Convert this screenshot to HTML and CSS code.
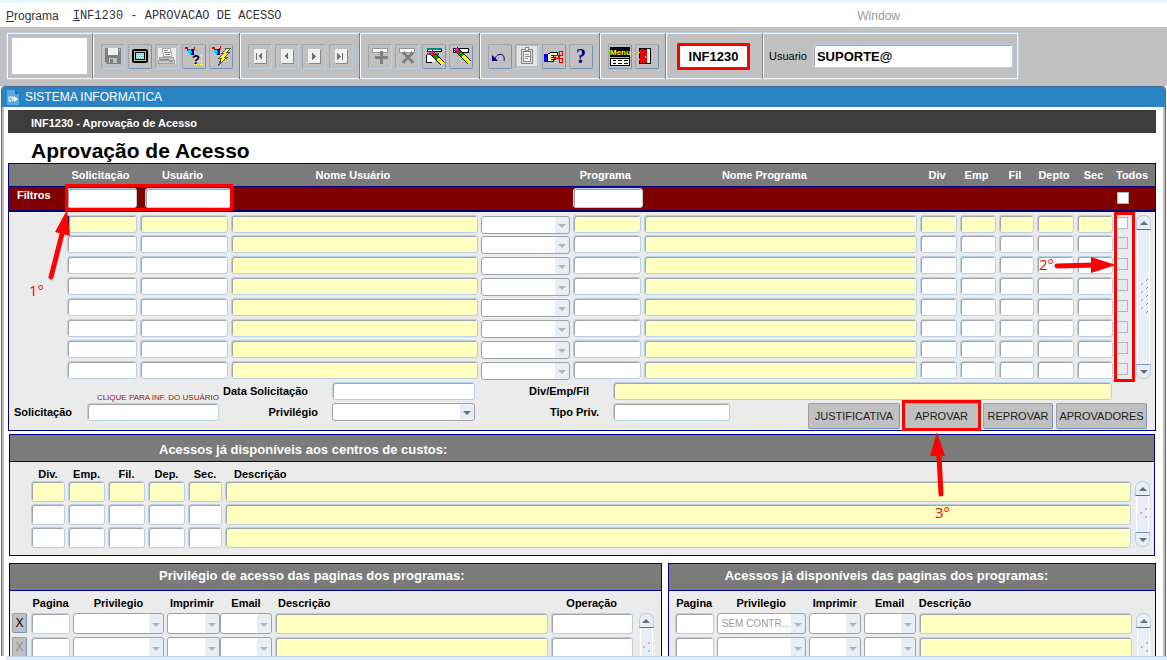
FILE: index.html
```html
<!DOCTYPE html>
<html lang="pt-BR">
<head>
  <meta charset="utf-8">
  <title>INF1230 - Aprovação de Acesso</title>
  <meta content="width=device-width, initial-scale=1" name="viewport">
  <link rel="stylesheet" href="styles.css">
</head>
<body>
  <nav class="menubar">
    <a href="#"><u>P</u>rograma</a>
    <a href="#" class="mono"><u>I</u>NF1230 - APROVACAO DE ACESSO</a>
    <a href="#" class="menu-window">Window</a>
  </nav>

  <!-- Toolbar -->
  <header class="toolbar-area">
    <div class="toolbar">
      <div class="group logo-group"><div class="logo"></div></div>

      <div class="group">
        <button type="button" class="tool" aria-label="Salvar" disabled>
          <svg width="20" height="20"><path fill="#808080" d="M2 2h16v16H4l-2-2z"/><path fill="#eee" d="M5 2h10v7H5z"/><path fill="#c0c0c0" d="M16 3h1v2h-1zM6 12h8v5H6z"/><path fill="#808080" d="M7 13h3v4H7z"/></svg>
        </button>
        <button type="button" class="tool" aria-label="Tela">
          <svg width="20" height="20"><path d="M3 3h14v1h1v12h-1v1H3v-1H2V4h1z"/><path fill="#c0c0c0" d="M4 5h12v10H4z"/><path d="M5 6h10v8H5z"/><path fill="#8ff" d="M6 7h8v6H6z"/><path stroke="#7aa" stroke-dasharray="1 1" d="M6 8.500h8M7 10.500h7M6 12.500h8"/></svg>
        </button>
        <button type="button" class="tool" aria-label="Imprimir" disabled>
          <svg width="20" height="20"><path fill="#eee" d="M1 2h18v16H1z"/><path fill="#fff" stroke="#aaa" d="M5.500 2.500h8l1 8h-8z"/><path stroke="#808080" d="M7 4.500h4M7 6.500h6M8 8.500h5"/><path fill="#c8c8c8" stroke="#a0a0a0" d="M2.500 11.500h14v3h-14zM1.500 14.500h16v3h-16z"/><path fill="#808080" d="M12 15h3v1h-3zM3 13h9v1H3z"/></svg>
        </button>
        <button type="button" class="tool" aria-label="Entrar consulta">
          <svg width="20" height="20"><path fill="#e00" d="M1 1h3v2h2v2H3V3H1zM10 1h1v3h-2V3h1z"/><path fill="#0cf" d="M4 4h4v2h1v3H6V7H4z"/><path fill="#00008b" d="M7 3h3v6H7V7h1V5H7z"/><path stroke="#ff6" stroke-dasharray="1 1" d="M10 9.500h9M11 12.500h8M9 15.500h10M10 18.500h9M17.500 8v11"/><text x="8" y="18" class="query-mark">?</text></svg>
        </button>
        <button type="button" class="tool" aria-label="Executar consulta">
          <svg width="20" height="20"><path fill="#e00" d="M1 1h3v2h2v2H3V3H1zM9 0h1v3H8V2h1z"/><path fill="#0cf" d="M3 4h4v2h1v3H5V7H3z"/><path fill="#00008b" d="M6 3h3v6H6V7h1V5H6z"/><path fill="#ff0" stroke="#555" d="M15 2.500h4l-3 4h2l-4 5h2l-8 7 2-6H8l4-5h-1z"/></svg>
        </button>
      </div>

      <div class="group">
        <button type="button" class="tool nav" aria-label="Primeiro" disabled>
          <svg width="12" height="14"><path d="M2 4h1v7H2zM4 7l4-3v7z"/></svg>
        </button>
        <button type="button" class="tool nav" aria-label="Anterior" disabled>
          <svg width="12" height="14"><path d="M3 7l4-3v7z"/></svg>
        </button>
        <button type="button" class="tool nav" aria-label="Próximo" disabled>
          <svg width="12" height="14"><path d="M4 4l4 3-4 4z"/></svg>
        </button>
        <button type="button" class="tool nav" aria-label="Último" disabled>
          <svg width="12" height="14"><path d="M2 4l4 3-4 4zM7 4h1v7H7z"/></svg>
        </button>
      </div>

      <div class="group">
        <button type="button" class="tool" aria-label="Inserir registro" disabled>
          <svg width="20" height="20"><path fill="#fff" stroke="#999" d="M2.500 2.500h15v4h-15z"/><path fill="#808080" d="M10 5h3v5h5v3h-5v5h-3v-5H5v-3h5z"/></svg>
        </button>
        <button type="button" class="tool" aria-label="Remover registro" disabled>
          <svg width="20" height="20"><path fill="#fff" stroke="#999" d="M2.500 2.500h15v4h-15z"/><path stroke="#808080" stroke-width="3" fill="none" d="M6 6l10 11M16 6L6 17"/></svg>
        </button>
        <button type="button" class="tool" aria-label="Editar registro">
          <svg width="20" height="20"><path fill="#fff" stroke="#000" d="M3.500 2.500h14v3h-14z"/><path fill="#088" d="M3 2h15v2H3zM3 7h12v2H3z"/><path fill="#fff" d="M2 9h9v7H2z"/><path fill="#000" d="M2 9h1v7H2zM2 16h6v1H2z"/><path stroke="#000" stroke-width="5" d="M7 6l12 12"/><path stroke="#f0f" stroke-width="4" d="M7 6l3 3"/><path stroke="#e00" stroke-width="4" d="M9 8l3 3"/><path stroke="#090" stroke-width="4" d="M11 10l3 3"/><path stroke="#ff0" stroke-width="4" d="M14 13l5 5"/></svg>
        </button>
        <button type="button" class="tool" aria-label="Limpar registro">
          <svg width="20" height="20"><path fill="#fff" stroke="#000" d="M2.500 2.500h15v4h-15z"/><path stroke="#000" stroke-width="5" d="M5 3l14 14"/><path stroke="#f0f" stroke-width="4" d="M5 3l3 3"/><path stroke="#e00" stroke-width="4" d="M7 5l3 3"/><path stroke="#090" stroke-width="4" d="M9 7l3 3"/><path stroke="#ff0" stroke-width="4" d="M12 10l7 7"/></svg>
        </button>
      </div>

      <div class="group">
        <button type="button" class="tool" aria-label="Desfazer">
          <svg width="20" height="20" class="smooth"><path fill="none" stroke="#00007b" d="M5 13c1-6 11-7 9 2"/><path fill="#00007b" d="M2 9v6h6z"/></svg>
        </button>
        <button type="button" class="tool" aria-label="Colar" disabled>
          <svg width="20" height="20"><path fill="#e4e4e4" d="M0 0h20v20H0z"/><path fill="#ddd" stroke="#888" d="M4.500 3.500h11v14h-11z"/><path fill="#fff" stroke="#888" d="M6.500 5.500h7v10h-7zM8.500 1.500h3v3h-3z"/><path stroke="#888" d="M8 8.500h4M8 10.500h5M8 12.500h3"/></svg>
        </button>
        <button type="button" class="tool" aria-label="Recortar">
          <svg width="20" height="20"><path fill="#00f" d="M0 8h3v8H0z"/><path fill="#ff9" stroke="#000" d="M3.500 8.500l3-2h7v3h-4v2h2v2h-2v2h-6z"/><path stroke="#000" d="M7 9.500h3M7 11.500h3M7 13.500h2"/><path fill="none" stroke="#e00" d="M10 9.500h4l2 2M10 12.500h4l2-2M15.500 5.500h3v4h-3zM15.500 12.500h3v4h-3z"/></svg>
        </button>
        <button type="button" class="tool" aria-label="Ajuda">
          <svg width="20" height="22"><text x="5" y="18" class="help-mark">?</text></svg>
        </button>
      </div>

      <div class="group">
        <button type="button" class="tool" aria-label="Menu">
          <svg width="22" height="20"><path d="M1 1h20v19H1z"/><text x="1" y="9" class="menu-mark">Menu</text><path fill="#0ff" d="M1 11h19v1H1z"/><path fill="#fff" d="M2 13h18v6H2z"/><path stroke="#000" d="M4 14.500h3M9 14.500h4M15 14.500h4M4 17.500h3M9 17.500h4M15 17.500h4"/></svg>
        </button>
        <button type="button" class="tool" aria-label="Sair">
          <svg width="20" height="20"><path d="M2 2h12v16H2z"/><path fill="#fff" d="M10 3h3v14h-3z"/><path fill="#e00" d="M3 3l7 1v12l-3 1H3z"/><path fill="#ff0" d="M1 6h2v1H1zM1 13h2v1H1zM8 10h1v2H8z"/></svg>
        </button>
      </div>

      <div class="group code-group">
        <input class="program-code" aria-label="Código do programa" value="INF1230">
      </div>

      <div class="group user-group">
        <label for="usuario">Usuario</label>
        <input id="usuario" class="field user-field" value="SUPORTE@">
      </div>
    </div>
  </header>

  <!-- Application window -->
  <main class="window">
    <div class="titlebar">
      <svg width="12" height="15" viewBox="0 0 12 15"><path fill="#55aade" d="M0 0h8l4 4v11H0z"/><path fill="#1c6ca8" d="M8 0v4h4z"/><circle cx="4" cy="9" r="2" fill="none" stroke="#fff" stroke-width="2" stroke-dasharray="2 1"/><path fill="#fff" d="M7 6l4 3-4 3z"/></svg>
      <span>SISTEMA INFORMATICA</span>
    </div>

    <div class="content">
      <div class="program-bar">INF1230 - Aprovação de Acesso</div>
      <h1>Aprovação de Acesso</h1>

      <section class="panel requests">
        <table class="requests-table">
          <colgroup>
            <col class="w58"><col class="w73"><col class="w91"><col class="w-name"><col class="w92"><col class="w71"><col>
            <col class="w40"><col class="w39"><col class="w38"><col class="w40"><col class="w39"><col class="w17"><col class="w22">
          </colgroup>
          <thead>
            <tr class="names">
              <th></th><th>Solicitação</th><th>Usuário</th><th>Nome Usuário</th><th></th><th>Programa</th>
              <th class="program-name">Nome Programa</th><th>Div</th><th>Emp</th><th>Fil</th><th>Depto</th><th>Sec</th>
              <th colspan="2" class="left">Todos</th>
            </tr>
            <tr class="filters">
              <th class="filter-title">Filtros</th>
              <td class="anchor">
                <input class="field" aria-label="Filtro solicitação">
                <div class="mark mark-filters"></div>
                <svg class="note note-1" width="50" height="95"><path class="line" d="M24 69L35 26"/><path class="head" d="M40 2l3 26-15-4z"/><text x="2" y="88">1°</text></svg>
              </td>
              <td class="filter-user"><input class="field" aria-label="Filtro usuário"></td>
              <td></td><td></td>
              <td class="filter-program"><input class="field" aria-label="Filtro programa"></td>
              <td></td><td></td><td></td><td></td><td></td><td></td>
              <td><input type="checkbox" aria-label="Todos"></td><td></td>
            </tr>
          </thead>
          <tbody data-rows="8">
            <tr>
              <td></td>
              <td><input class="field current" aria-label="Solicitação"></td>
              <td><input class="field" aria-label="Usuário"></td>
              <td><input class="field calc" aria-label="Nome usuário"></td>
              <td><select class="field" aria-label="Tipo" disabled></select></td>
              <td><input class="field" aria-label="Programa"></td>
              <td><input class="field calc" aria-label="Nome programa"></td>
              <td><input class="field" aria-label="Div"></td>
              <td><input class="field" aria-label="Emp"></td>
              <td><input class="field" aria-label="Fil"></td>
              <td><input class="field" aria-label="Depto"></td>
              <td><input class="field" aria-label="Sec"></td>
              <td class="anchor">
                <input type="checkbox" aria-label="Aprovar linha">
                <div class="mark mark-checks"></div>
                <svg class="note note-2" width="82" height="30"><path class="line" d="M21 15L60 14"/><path class="head" d="M80 14L55 6v16z"/><text x="3" y="19">2°</text></svg>
              </td>
              <td class="scroll-cell" rowspan="8">
                <div class="scrollbar"><button type="button" class="up" aria-label="Subir"></button><span class="track"></span><button type="button" class="down" aria-label="Descer"></button></div>
              </td>
            </tr>
            <tr>
              <td></td>
              <td><input class="field" aria-label="Solicitação"></td>
              <td><input class="field" aria-label="Usuário"></td>
              <td><input class="field calc" aria-label="Nome usuário"></td>
              <td><select class="field" aria-label="Tipo" disabled></select></td>
              <td><input class="field" aria-label="Programa"></td>
              <td><input class="field calc" aria-label="Nome programa"></td>
              <td><input class="field" aria-label="Div"></td>
              <td><input class="field" aria-label="Emp"></td>
              <td><input class="field" aria-label="Fil"></td>
              <td><input class="field" aria-label="Depto"></td>
              <td><input class="field" aria-label="Sec"></td>
              <td><input type="checkbox" aria-label="Aprovar linha" disabled></td>
            </tr>
          </tbody>
        </table>

        <form class="detail">
          <a href="#" class="user-info">CLIQUE PARA INF. DO USUÁRIO</a>
          <label for="data" class="upper col-3">Data Solicitação</label>
          <input id="data" class="field">
          <label for="div-emp-fil" class="upper">Div/Emp/Fil</label>
          <input id="div-emp-fil" class="field calc long">

          <label for="solicitacao" class="detail-request">Solicitação</label>
          <input id="solicitacao" class="field">
          <label for="privilegio" class="lower">Privilégio</label>
          <select id="privilegio" class="field"></select>
          <label for="tipo" class="lower">Tipo Priv.</label>
          <div class="actions">
            <input id="tipo" class="field type">
            <button type="button" class="btn btn-justify">JUSTIFICATIVA</button>
            <div class="anchor">
              <button type="button" class="btn btn-approve">APROVAR</button>
              <div class="mark mark-approve"></div>
              <svg class="note note-3" width="34" height="94"><path class="line" d="M14 63L12 25"/><path class="head" d="M10 1l8 24H3z"/><text x="8" y="87">3°</text></svg>
            </div>
            <button type="button" class="btn btn-reject">REPROVAR</button>
            <button type="button" class="btn btn-approvers">APROVADORES</button>
          </div>
        </form>
      </section>

      <section class="panel centers">
        <h2>Acessos já disponíveis aos centros de custos:</h2>
        <table class="centers-table">
          <colgroup>
            <col class="w21"><col class="w37"><col class="w40"><col class="w40"><col class="w40"><col class="w37"><col><col class="w22">
          </colgroup>
          <thead>
            <tr><th></th><th>Div.</th><th>Emp.</th><th>Fil.</th><th>Dep.</th><th>Sec.</th><th class="left">Descrição</th><th></th></tr>
          </thead>
          <tbody data-rows="3">
            <tr>
              <td></td>
              <td><input class="field" aria-label="Div."></td>
              <td><input class="field" aria-label="Emp."></td>
              <td><input class="field" aria-label="Fil."></td>
              <td><input class="field" aria-label="Dep."></td>
              <td><input class="field" aria-label="Sec."></td>
              <td class="wide"><input class="field calc" aria-label="Descrição"></td>
              <td class="scroll-cell" rowspan="3">
                <div class="scrollbar short"><button type="button" class="up" aria-label="Subir"></button><span class="track"></span><button type="button" class="down" aria-label="Descer"></button></div>
              </td>
            </tr>
            <tr>
              <td></td>
              <td><input class="field" aria-label="Div."></td>
              <td><input class="field" aria-label="Emp."></td>
              <td><input class="field" aria-label="Fil."></td>
              <td><input class="field" aria-label="Dep."></td>
              <td><input class="field" aria-label="Sec."></td>
              <td class="wide"><input class="field calc" aria-label="Descrição"></td>
            </tr>
          </tbody>
        </table>
      </section>

      <div class="pages">
        <section class="panel pages-privilege">
          <h2>Privilégio de acesso das paginas dos programas:</h2>
          <table class="pages-table">
            <colgroup>
              <col class="w21"><col class="w42"><col class="w94"><col class="w53"><col class="w55"><col><col class="w85"><col class="w25">
            </colgroup>
            <thead>
              <tr><th></th><th>Pagina</th><th>Privilegio</th><th>Imprimir</th><th>Email</th><th class="left">Descrição</th><th>Operação</th><th></th></tr>
            </thead>
            <tbody>
              <tr>
                <td class="x-cell"><button type="button" class="btn-x">X</button></td>
                <td><input class="field" aria-label="Pagina"></td>
                <td><select class="field" aria-label="Privilegio" disabled></select></td>
                <td class="tight"><select class="field" aria-label="Imprimir" disabled></select></td>
                <td><select class="field" aria-label="Email" disabled></select></td>
                <td><input class="field calc" aria-label="Descrição"></td>
                <td><input class="field" aria-label="Operação"></td>
                <td class="scroll-cell" rowspan="2">
                  <div class="scrollbar short"><button type="button" class="up" aria-label="Subir"></button><span class="track"></span><button type="button" class="down" aria-label="Descer"></button></div>
                </td>
              </tr>
              <tr>
                <td class="x-cell"><button type="button" class="btn-x" disabled>X</button></td>
                <td><input class="field" aria-label="Pagina"></td>
                <td><select class="field" aria-label="Privilegio" disabled></select></td>
                <td class="tight"><select class="field" aria-label="Imprimir" disabled></select></td>
                <td><select class="field" aria-label="Email" disabled></select></td>
                <td><input class="field calc" aria-label="Descrição"></td>
                <td><input class="field" aria-label="Operação"></td>
              </tr>
            </tbody>
          </table>
        </section>

        <section class="panel pages-access">
          <h2>Acessos já disponíveis das paginas dos programas:</h2>
          <table class="pages-table">
            <colgroup>
              <col class="w6"><col class="w42"><col class="w92"><col class="w55"><col class="w55"><col><col class="w22">
            </colgroup>
            <thead>
              <tr><th></th><th>Pagina</th><th>Privilegio</th><th>Imprimir</th><th>Email</th><th class="left">Descrição</th><th></th></tr>
            </thead>
            <tbody>
              <tr>
                <td></td>
                <td><input class="field" aria-label="Pagina"></td>
                <td><select class="field" aria-label="Privilegio" disabled><option>SEM CONTR...</option></select></td>
                <td><select class="field" aria-label="Imprimir" disabled></select></td>
                <td><select class="field" aria-label="Email" disabled></select></td>
                <td class="wide"><input class="field calc" aria-label="Descrição"></td>
                <td class="scroll-cell" rowspan="2">
                  <div class="scrollbar short"><button type="button" class="up" aria-label="Subir"></button><span class="track"></span><button type="button" class="down" aria-label="Descer"></button></div>
                </td>
              </tr>
              <tr>
                <td></td>
                <td><input class="field" aria-label="Pagina"></td>
                <td><select class="field" aria-label="Privilegio" disabled></select></td>
                <td><select class="field" aria-label="Imprimir" disabled></select></td>
                <td><select class="field" aria-label="Email" disabled></select></td>
                <td class="wide"><input class="field calc" aria-label="Descrição"></td>
              </tr>
            </tbody>
          </table>
        </section>
      </div>
    </div>
  </main>
  <footer class="statusbar"></footer>

  <script>
    // Each block shows a fixed number of records, so repeat its blank row
    document.querySelectorAll("tbody[data-rows]").forEach(body => {
      const blank = body.rows[1];
      while (body.rows.length < Number(body.dataset.rows)) {
        body.appendChild(blank.cloneNode(true));
      }
    });
  </script>
</body>
</html>
```
FILE: styles.css
```css
* {
  box-sizing: border-box;
}
body {
  margin: 0;
  height: 100vh;
  display: flex;
  flex-direction: column;
  overflow: hidden;
  font-family: "Liberation Sans", Arial, sans-serif;
  font-size: 11px;
  color: #000;
  background: #fff;
}
input, select, button {
  font-family: inherit;
  font-size: 11px;
  margin: 0;
  padding: 0;
}
a {
  color: inherit;
  text-decoration: none;
}

/* Menu */
.menubar {
  display: flex;
  align-items: center;
  gap: 14px;
  height: 27px;
  padding: 2px 0 0 6px;
  border-top: 3px solid #e8f7f9;
  font-size: 12px;
  color: #333;
}
.mono {
  font-family: "Liberation Mono", "Courier New", monospace;
}
.menu-window {
  margin-left: auto;
  margin-right: 23%;
  color: #999;
}

/* Toolbar */
.toolbar-area {
  display: flex;
  padding: 5px 6px 6px;
  background: #c0c0c0;
}
.toolbar {
  display: flex;
  height: 48px;
  border: 1px solid #b8cfe5;
  box-shadow: inset 0 0 0 1px #eef4fa;
}
.group {
  display: flex;
  align-items: center;
  gap: 3px;
  padding: 0 6px 0 7px;
  border-right: 1px solid #808080;
  box-shadow: 1px 0 0 #fff;
  margin-right: 1px;
}
.group:last-child {
  border-right: none;
  box-shadow: none;
}
.logo-group {
  padding: 0 5px;
}
.logo {
  width: 75px;
  height: 36px;
  background: #fff;
}
.tool {
  display: flex;
  align-items: center;
  justify-content: center;
  width: 24px;
  height: 25px;
  border: 1px solid;
  border-color: #a4a4a4 #7394b8 #7394b8 #a4a4a4;
  border-radius: 2px;
  background: #c0c0c0;
}
.tool:disabled {
  border-color: #a4a4a4 #b8cfe5 #b8cfe5 #a4a4a4;
}
.tool svg {
  flex: none;
  overflow: visible;
  shape-rendering: crispEdges;
}
.tool svg.smooth {
  shape-rendering: auto;
}
.nav svg {
  background: #eee;
  box-shadow: 1px 1px 0 #888;
  fill: #707070;
}
.query-mark {
  font: bold 13px "Liberation Sans", Arial, sans-serif;
}
.help-mark {
  font: bold 20px "Liberation Serif", serif;
  fill: #00007b;
}
.menu-mark {
  font: bold 8px "Liberation Sans", Arial, sans-serif;
  fill: #ff0;
}
.code-group {
  padding: 0 12px 0 10px;
}
.program-code {
  width: 73px;
  height: 27px;
  border: 3px solid #f00;
  border-radius: 1px;
  background: #fff;
  font-size: 13px;
  font-weight: bold;
  text-align: center;
}
.user-group {
  gap: 6px;
  padding: 0 4px 0 5px;
}

/* Fields */
.field {
  display: block;
  width: 100%;
  height: 18px;
  border: 1px solid #b8cfe5;
  border-radius: 3px;
  background: #fff;
  box-shadow: inset 1px 1px 0 #a0a6ae;
}
.field.calc {
  background: #ffffc0;
}
.user-field {
  width: 200px;
  height: 24px;
  padding-left: 3px;
  font-size: 13px;
  font-weight: bold;
}
select.field {
  appearance: none;
  padding-left: 4px;
  border-color: #9ca2aa;
  box-shadow: none;
  color: #999;
  opacity: 1;
  font-size: 10px;
  background: #fff url('data:image/svg+xml,<svg xmlns="http://www.w3.org/2000/svg" width="14" height="20"><path fill="%23e8eef6" d="M0 0h14v20H0z"/><path fill="%23666c84" d="M3 9h8l-4 4z"/></svg>') no-repeat right center;
}
select.field:disabled {
  background-image: url('data:image/svg+xml,<svg xmlns="http://www.w3.org/2000/svg" width="14" height="20"><path fill="%23e8eef6" d="M0 0h14v20H0z"/><path fill="%23b4b4b4" d="M3 9h8l-4 4z"/></svg>');
}
input[type="checkbox"] {
  appearance: none;
  display: block;
  width: 12px;
  height: 12px;
  border: 1px solid #b0b6be;
  background: #fff;
}
input[type="checkbox"]:disabled {
  background: #e6eaf0;
}

/* Window */
.window {
  flex: 1;
  min-height: 0;
  display: flex;
  flex-direction: column;
  margin: 0 1px;
  border: 1px solid #4d6a94;
  border-bottom: none;
  border-radius: 4px 4px 0 0;
  overflow: hidden;
}
.titlebar {
  display: flex;
  flex: none;
  align-items: center;
  gap: 6px;
  height: 20px;
  padding-left: 5px;
  background: #2a83c4;
  color: #fff;
  font-size: 12px;
}
.content {
  flex: 1;
  min-height: 0;
  overflow: hidden;
  padding: 3px 7px 0 4px;
  border: solid #c0c0c0;
  border-width: 0 2px;
}
.program-bar {
  height: 23px;
  padding-left: 23px;
  background: #3d3d3d;
  color: #fff;
  font-weight: bold;
  line-height: 26px;
}
h1 {
  margin: 0;
  padding: 4px 0 0 23px;
  height: 30px;
  font-size: 21px;
  line-height: 28px;
}

/* Panels */
.panel {
  border: 1px solid #000080;
  background: #ebebeb;
}
h2 {
  margin: 0;
  padding-left: 149px;
  height: 27px;
  border-bottom: 1px solid #000080;
  background: #7b7b7b;
  color: #fff;
  font-size: 13px;
  line-height: 30px;
}
.pages h2 {
  line-height: 24px;
}
table {
  width: 100%;
  table-layout: fixed;
  border-collapse: collapse;
}
th, td {
  padding: 0 3px 0 0;
  vertical-align: top;
}
th {
  white-space: nowrap;
}
th.left {
  padding-left: 9px;
  text-align: left;
}
td.wide {
  padding-right: 1px;
}
.w6 { width: 6px; }
.w17 { width: 17px; }
.w21 { width: 21px; }
.w22 { width: 22px; }
.w25 { width: 25px; }
.w37 { width: 37px; }
.w38 { width: 38px; }
.w39 { width: 39px; }
.w40 { width: 40px; }
.w42 { width: 42px; }
.w53 { width: 53px; }
.w55 { width: 55px; }
.w58 { width: 58px; }
.w71 { width: 71px; }
.w73 { width: 73px; }
.w85 { width: 85px; }
.w91 { width: 91px; }
.w92 { width: 92px; }
.w94 { width: 94px; }
.w-name { width: 21.8%; }

/* Requests block */
.requests-table .names {
  height: 22px;
  background: #7b7b7b;
  color: #fff;
}
.names th {
  padding-right: 6px;
  vertical-align: middle;
}
.names th.left {
  padding: 0;
}
.names th.program-name {
  padding-right: 35px;
}
.filters {
  height: 25px;
  background: #800000;
  color: #fff;
}
.filters th, .filters td {
  padding-top: 1px;
  border-top: 1px solid #000080;
  border-bottom: 2px solid #000080;
}
.filters .field {
  height: 20px;
}
.filters .filter-title {
  padding: 2px 0 0 8px;
  text-align: left;
}
.filters .filter-user {
  padding-left: 5px;
  padding-right: 0;
}
.filters .filter-program {
  padding-right: 1px;
}
.filters input[type="checkbox"] {
  margin: 4px 0 0 1px;
}
.requests-table tbody tr {
  height: 21px;
}
.requests-table tbody tr:first-child {
  height: 24px;
}
.requests-table tbody tr:first-child td {
  padding-top: 3px;
}
tbody tr:first-child .field {
  background-color: #ffffc0;
}
tbody tr:first-child select.field,
.pages-table tr:first-child .field:not(.calc) {
  background-color: #fff;
}
.requests-table tbody select.field {
  margin-top: 1px;
}
.requests-table tbody input[type="checkbox"] {
  margin-top: 2px;
}
.field.current {
  border-left: 2px solid #000080;
}

/* Request detail */
.detail {
  display: grid;
  grid-template-columns: 78px 132px 113px 143px 138px 1fr;
  grid-template-rows: 21px 27px;
}
.detail label {
  font-weight: bold;
  line-height: 18px;
}
.detail .upper {
  padding-right: 24px;
  text-align: right;
}
.detail .lower {
  padding-right: 14px;
  text-align: right;
}
.detail-request {
  padding-left: 5px;
}
.user-info {
  grid-column: 1 / 3;
  align-self: end;
  padding-bottom: 1px;
  color: #8b1a1a;
  font-size: 8px;
  text-align: right;
}
.detail .long {
  width: auto;
  margin-right: 43px;
}
.actions {
  display: flex;
  align-items: flex-start;
  gap: 3px;
  padding-right: 8px;
}
.type {
  width: 117px;
  margin-right: auto;
}
.btn {
  display: block;
  height: 26px;
  border: 1px solid;
  border-color: #a0a0a0 #7394b8 #7394b8 #a0a0a0;
  border-radius: 2px;
  background: #c0c0c0;
  color: #222;
}
.btn-justify {
  width: 92px;
}
.btn-approve {
  width: 77px;
}
.btn-reject {
  width: 70px;
}
.btn-approvers {
  width: 91px;
}

/* Cost centers */
.centers {
  margin: 3px 1px 7px;
  padding-bottom: 5px;
}
.centers-table thead tr {
  height: 19px;
}
.centers-table th {
  padding-top: 6px;
}
.centers-table tbody tr {
  height: 23px;
}
.centers-table .field {
  height: 21px;
}

/* Page privileges */
.pages {
  display: flex;
  gap: 6px;
  margin-left: 1px;
}
.pages-privilege {
  flex: 653;
}
.pages-access {
  flex: 488;
}
.pages-access h2 {
  padding-left: 56px;
}
.pages-table thead tr {
  height: 22px;
}
.pages-table th {
  padding-top: 6px;
}
.pages-table th.left {
  padding-left: 3px;
}
.pages-access th.left {
  padding-left: 0;
}
.pages-table tbody tr {
  height: 24px;
}
.pages-table .field {
  height: 21px;
}
.tight {
  padding-right: 0;
}
.x-cell {
  padding-left: 2px;
}
.btn-x {
  width: 15px;
  height: 20px;
  border: 1px solid;
  border-color: #a0a0a0 #7394b8 #7394b8 #a0a0a0;
  border-radius: 2px;
  background: #c0c0c0;
  font-size: 12px;
}
.btn-x:disabled {
  color: #909090;
}

/* Scrollbars */
.scroll-cell {
  height: 1px;
  padding: 0 4px 3px 3px;
}
.scrollbar {
  display: flex;
  flex-direction: column;
  width: 15px;
  height: 100%;
}
.pages-table .scrollbar {
  height: 70px;
  margin-bottom: -26px;
}
.scrollbar button {
  flex: none;
  height: 15px;
  border: 1px solid #b8cfe5;
  background: #e8eef6 no-repeat center;
}
.scrollbar .up {
  border-radius: 7px 7px 0 0;
  border-bottom-color: #666c84;
  background-image: url('data:image/svg+xml,<svg xmlns="http://www.w3.org/2000/svg" width="8" height="4"><path fill="%23666c84" d="M0 4h8L4 0z"/></svg>');
}
.scrollbar .down {
  border-radius: 0 0 7px 7px;
  border-top-color: #7394b8;
  background-image: url('data:image/svg+xml,<svg xmlns="http://www.w3.org/2000/svg" width="8" height="4"><path fill="%23666c84" d="M0 0h8L4 4z"/></svg>');
}
.track {
  flex: 1;
  margin: 0 1px;
  border: solid #fff;
  border-width: 0 1px;
  background: #e8eef6 url('data:image/svg+xml,<svg xmlns="http://www.w3.org/2000/svg" width="8" height="36"><g stroke="%237394b8"><path d="M6 2l2-2M1 6l2-2M6 10l2-2M1 14l2-2M6 18l2-2M1 22l2-2M6 26l2-2M1 30l2-2M6 34l2-2"/></g></svg>') no-repeat center;
}
.short .track {
  background-image: url('data:image/svg+xml,<svg xmlns="http://www.w3.org/2000/svg" width="8" height="12"><g stroke="%237394b8"><path d="M6 2l2-2M1 6l2-2M6 10l2-2"/></g></svg>');
}

/* Step marks over the form */
.anchor {
  position: relative;
}
.mark {
  position: absolute;
  z-index: 2;
  border: 3px solid #f00;
  pointer-events: none;
}
.mark-filters {
  left: -2px;
  top: -3px;
  width: 168px;
  height: 27px;
}
.mark-checks {
  left: -2px;
  top: 0;
  width: 21px;
  height: 170px;
}
.mark-approve {
  left: -1px;
  top: -3px;
  right: -1px;
  bottom: -2px;
}
.note {
  position: absolute;
  z-index: 3;
  pointer-events: none;
}
.note .line {
  stroke: #f00;
  stroke-width: 5;
  stroke-linecap: round;
}
.note .head {
  fill: #f00;
}
.note text {
  fill: #f00;
  font: 15px "Open Sans", sans-serif;
}
.note-1 {
  left: -40px;
  top: 21px;
}
.note-2 {
  left: -80px;
  top: 39px;
}
.note-3 {
  left: 24px;
  top: 28px;
}

.statusbar {
  flex: none;
  height: 4px;
  margin-left: 6px;
  border-top: 1px solid #b8cfe5;
  border-radius: 6px 0 0 0;
  background: #e8eef7;
}
```
